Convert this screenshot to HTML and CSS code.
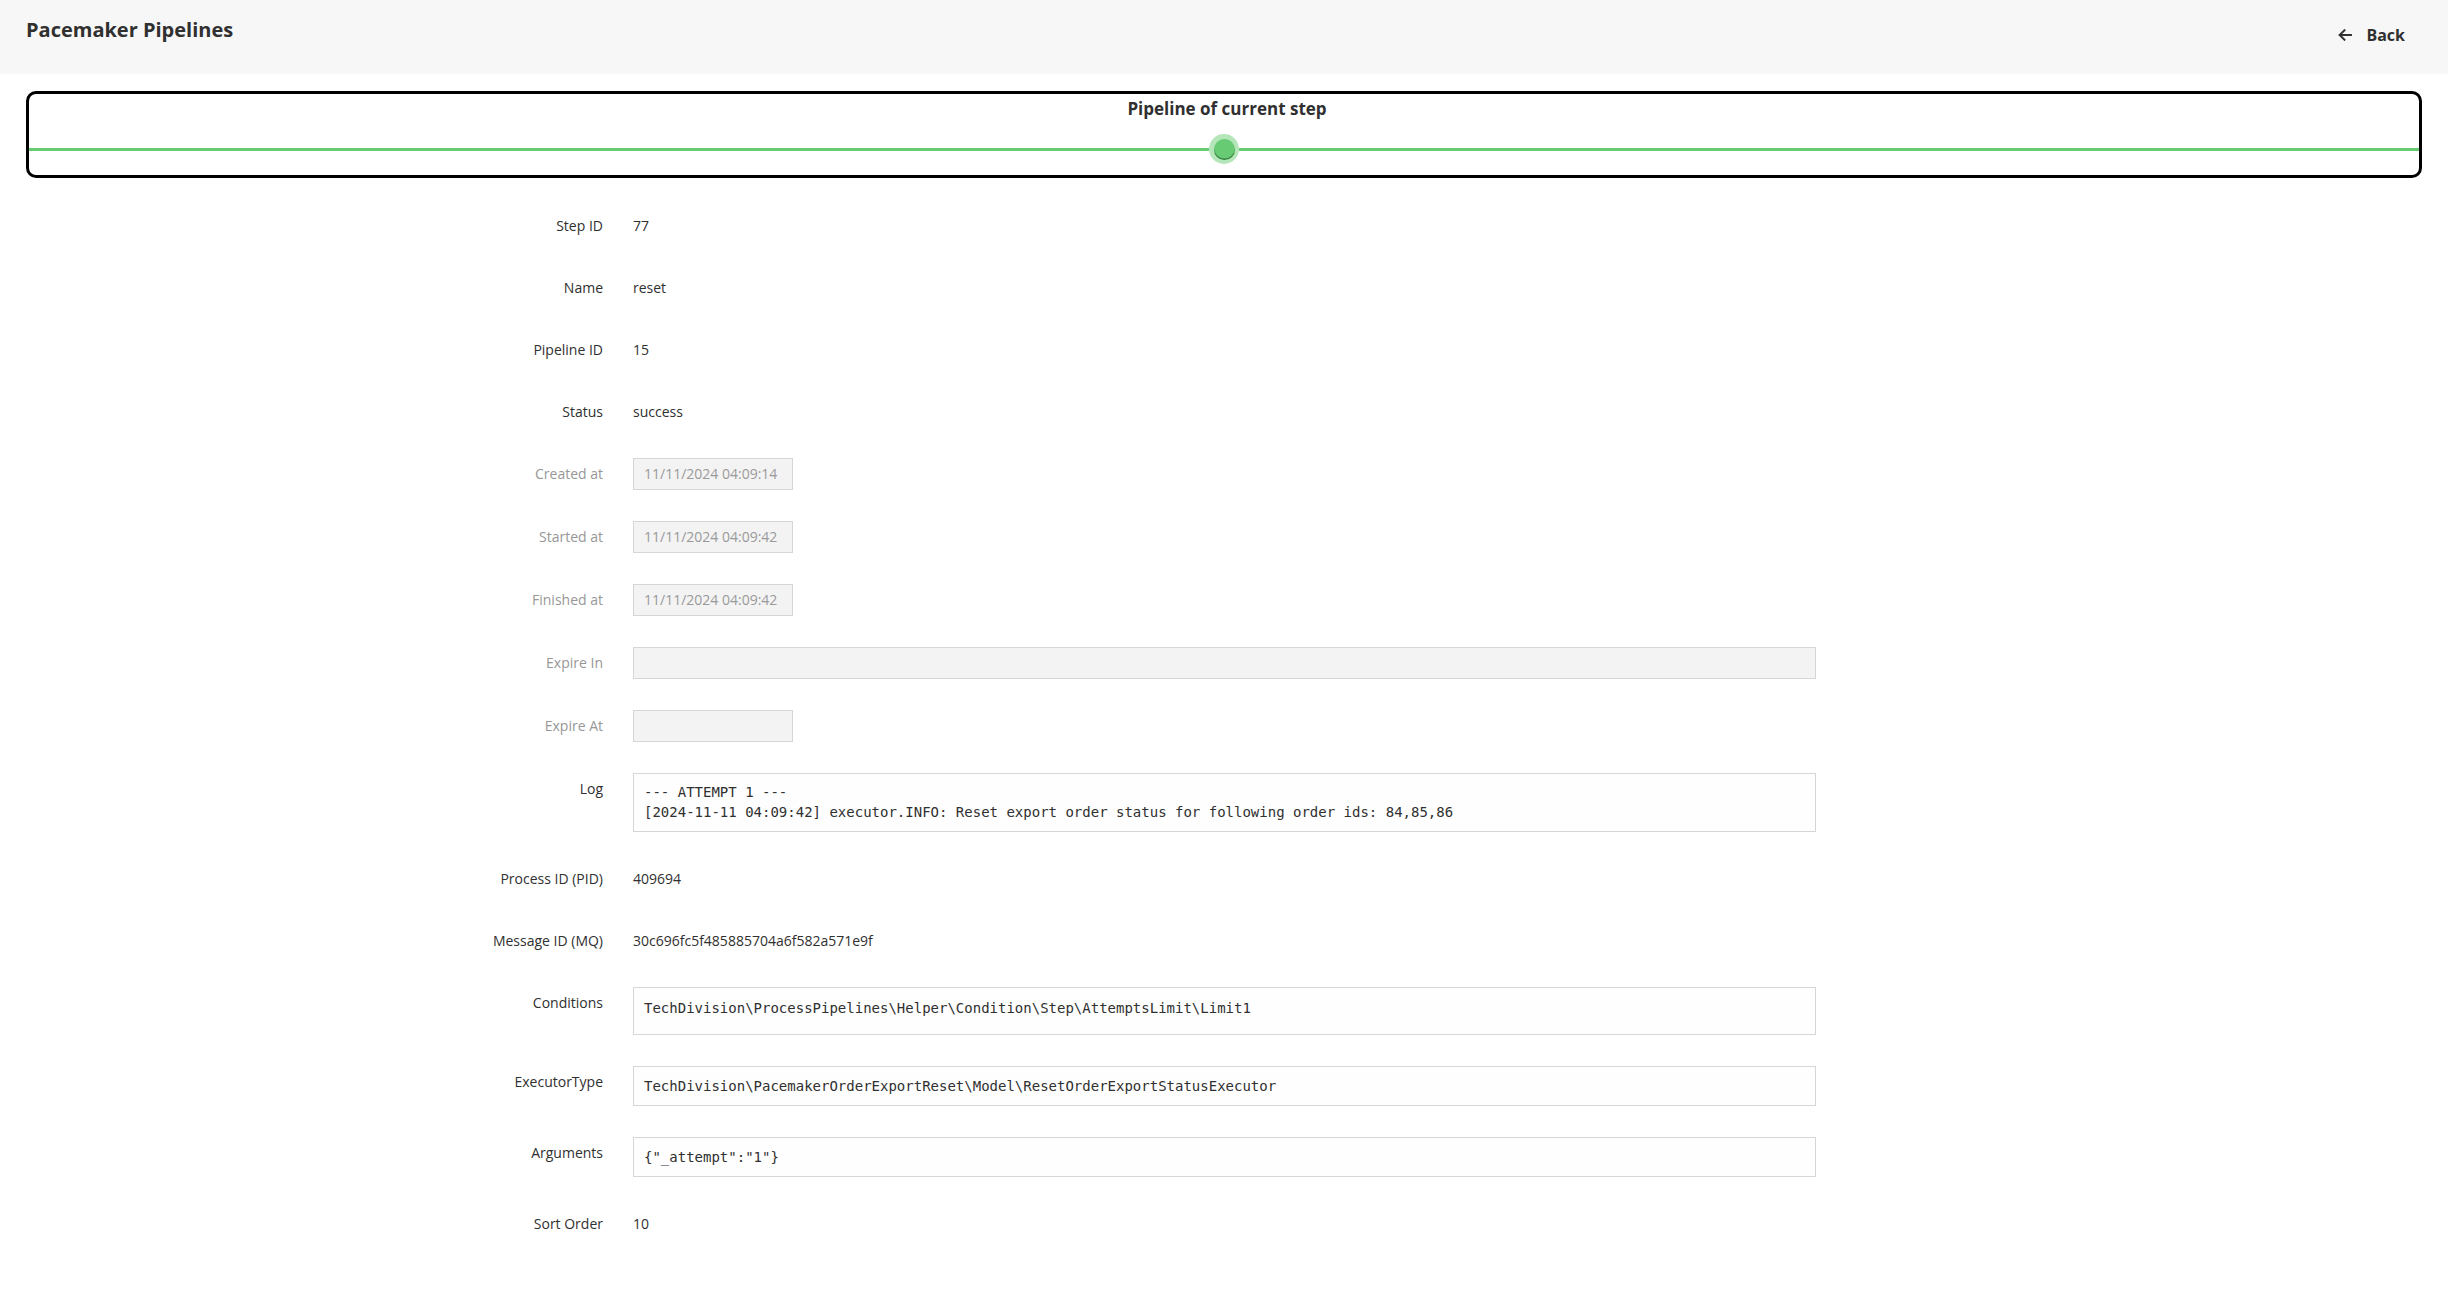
FILE: index.html
```html
<!DOCTYPE html>
<html lang="en">
<head>
<meta charset="utf-8">
<title>Pacemaker Pipelines</title>
<link rel="stylesheet" href="styles.css">
</head>
<body>
<header class="page-header">
  <h1 class="page-title">Pacemaker Pipelines</h1>
  <a class="back" href="#">
    <svg class="back-icon" width="14" height="12" viewBox="0 0 14 12" aria-hidden="true">
      <path d="M13 6H1.8M6.5 1.2L1.6 6l4.9 4.8" fill="none" stroke="#303030" stroke-width="1.9" stroke-linecap="square"/>
    </svg>
    <span>Back</span>
  </a>
</header>

<section class="pipeline">
  <div class="pipeline-title">Pipeline of current step</div>
  <div class="track">
    <span class="seg"></span>
    <span class="node"><span class="node-core"></span></span>
    <span class="seg"></span>
  </div>
</section>

<main class="form">
  <div class="row plain"><div class="label">Step ID</div><div class="value">77</div></div>
  <div class="row plain"><div class="label">Name</div><div class="value">reset</div></div>
  <div class="row plain"><div class="label">Pipeline ID</div><div class="value">15</div></div>
  <div class="row plain"><div class="label">Status</div><div class="value">success</div></div>

  <div class="row"><div class="label muted">Created at</div><div class="field"><div class="input disabled short">11/11/2024 04:09:14</div></div></div>
  <div class="row"><div class="label muted">Started at</div><div class="field"><div class="input disabled short">11/11/2024 04:09:42</div></div></div>
  <div class="row"><div class="label muted">Finished at</div><div class="field"><div class="input disabled short">11/11/2024 04:09:42</div></div></div>
  <div class="row"><div class="label muted">Expire In</div><div class="field"><div class="input disabled"></div></div></div>
  <div class="row"><div class="label muted">Expire At</div><div class="field"><div class="input disabled short"></div></div></div>

  <div class="row"><div class="label">Log</div><div class="field"><div class="code log">--- ATTEMPT 1 ---
[2024-11-11 04:09:42] executor.INFO: Reset export order status for following order ids: 84,85,86</div></div></div>

  <div class="row plain"><div class="label">Process ID (PID)</div><div class="value">409694</div></div>
  <div class="row plain"><div class="label">Message ID (MQ)</div><div class="value">30c696fc5f485885704a6f582a571e9f</div></div>

  <div class="row"><div class="label">Conditions</div><div class="field"><div class="code conditions">TechDivision\ProcessPipelines\Helper\Condition\Step\AttemptsLimit\Limit1</div></div></div>
  <div class="row"><div class="label">ExecutorType</div><div class="field"><div class="code line">TechDivision\PacemakerOrderExportReset\Model\ResetOrderExportStatusExecutor</div></div></div>
  <div class="row"><div class="label">Arguments</div><div class="field"><div class="code line">{"_attempt":"1"}</div></div></div>

  <div class="row plain"><div class="label">Sort Order</div><div class="value">10</div></div>
</main>
</body>
</html>
```

FILE: styles.css
```css
* { box-sizing: border-box; }

html, body {
  margin: 0;
  padding: 0;
  background: #ffffff;
}

body {
  font-family: "Open Sans", "Noto Sans", sans-serif;
  color: #303030;
  font-size: 14px;
}

.page-header {
  height: 74px;
  background: #f7f7f7;
  display: flex;
  justify-content: space-between;
  align-items: flex-start;
  padding: 0 43px 0 26px;
}

.page-title {
  margin: 16px 0 0;
  font-size: 20px;
  font-weight: 700;
  line-height: 27px;
  color: #303030;
}

.back {
  margin-top: 24px;
  display: flex;
  align-items: center;
  gap: 14px;
  color: #303030;
  text-decoration: none;
  font-weight: 700;
  font-size: 16px;
  line-height: 22px;
}

.back-icon { display: block; }

.pipeline {
  margin: 17px 26px 0;
  height: 87px;
  border: 3px solid #000000;
  border-radius: 10px;
  display: flex;
  flex-direction: column;
  align-items: stretch;
}

.pipeline-title {
  margin-top: 3px;
  padding-left: 6px;
  text-align: center;
  font-weight: 700;
  font-size: 17px;
  line-height: 24px;
  color: #303030;
}

.track {
  margin-top: 13px;
  height: 30px;
  display: flex;
  align-items: center;
}

.seg {
  flex: 1;
  height: 3px;
  background: #67cb73;
}

.node {
  width: 30px;
  height: 30px;
  border-radius: 50%;
  background: #b5e6ba;
  display: flex;
  align-items: center;
  justify-content: center;
}

.node-core {
  width: 21px;
  height: 21px;
  border-radius: 50%;
  background: #67cb73;
  box-shadow: inset 0 -1.5px 0 rgba(20, 70, 25, 0.55);
}

.form {
  display: flex;
  flex-direction: column;
  gap: 31px;
  padding: 32px 0 40px;
}

.row {
  display: grid;
  grid-template-columns: 603px 1183px;
  column-gap: 30px;
  align-items: start;
}

.label {
  text-align: right;
  line-height: 32px;
  color: #303030;
}

.label.muted { color: #979797; }

.row.plain .label,
.row.plain .value {
  line-height: 31px;
}

.value { color: #303030; }

.input {
  height: 32px;
  border: 1px solid #d6d6d6;
  padding: 0 10px;
  line-height: 30px;
  background: #ffffff;
}

.input.disabled {
  background: #f3f3f3;
  color: #9a9a9a;
}

.input.short { width: 160px; }

.code {
  font-family: "DejaVu Sans Mono", "Liberation Mono", monospace;
  font-size: 14px;
  color: #303030;
  border: 1px solid #d6d6d6;
  background: #fefefe;
  white-space: pre;
  padding: 0 10px;
}

.code.log {
  padding-top: 8px;
  padding-bottom: 9px;
  line-height: 20px;
  height: 59px;
}

.code.conditions {
  padding-top: 10px;
  line-height: 20px;
  height: 48px;
}

.code.line {
  height: 40px;
  line-height: 38px;
}
```
